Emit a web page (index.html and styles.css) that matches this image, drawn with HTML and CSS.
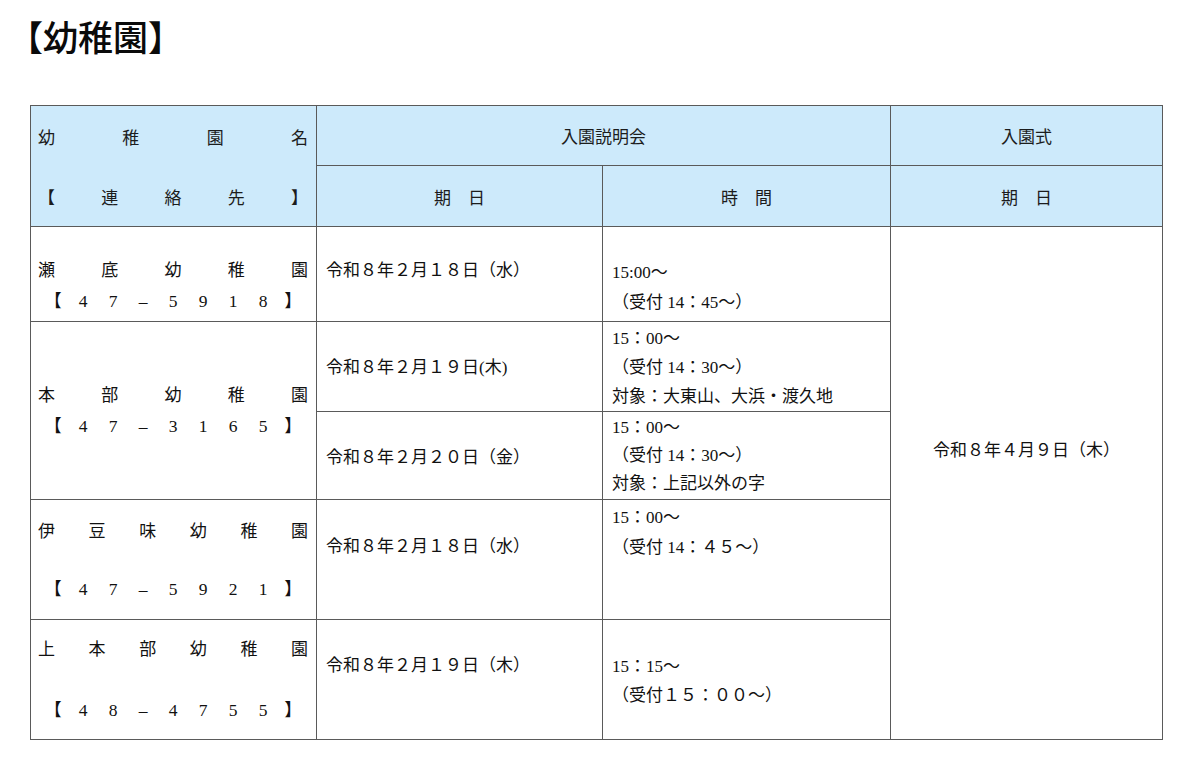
FILE: index.html
```html
<!DOCTYPE html>
<html lang="ja">
<head>
<meta charset="utf-8">
<title>幼稚園</title>
<link rel="stylesheet" href="styles.css">
</head>
<body>
<div class="page">
  <h1 class="title">【幼稚園】</h1>
  <table class="sched">
    <colgroup>
      <col class="c1"><col class="c2"><col class="c3"><col class="c4">
    </colgroup>
    <thead>
      <tr class="hr1">
        <th class="namehead" rowspan="2">
          <div class="hline spread"><span>幼</span><span>稚</span><span>園</span><span>名</span></div>
          <div class="hline spread"><span>【</span><span>連</span><span>絡</span><span>先</span><span>】</span></div>
        </th>
        <th colspan="2">入園説明会</th>
        <th>入園式</th>
      </tr>
      <tr class="hr2">
        <th>期　日</th>
        <th>時　間</th>
        <th>期　日</th>
      </tr>
    </thead>
    <tbody>
      <tr class="r1">
        <td class="name n1">
          <div class="ln spread"><span>瀬</span><span>底</span><span>幼</span><span>稚</span><span>園</span></div>
          <div class="ln phone"><span>【</span><span>4</span><span>7</span><span>–</span><span>5</span><span>9</span><span>1</span><span>8</span><span>】</span></div>
        </td>
        <td class="date d1"><div class="ln">令和８年２月１８日（水）</div></td>
        <td class="time t1"><div class="ln">15:00～</div><div class="ln">（受付 14：45～）</div></td>
        <td class="ceremony" rowspan="5"><div class="ln">令和８年４月９日（木）</div></td>
      </tr>
      <tr class="r2">
        <td class="name n2" rowspan="2">
          <div class="ln spread"><span>本</span><span>部</span><span>幼</span><span>稚</span><span>園</span></div>
          <div class="ln phone"><span>【</span><span>4</span><span>7</span><span>–</span><span>3</span><span>1</span><span>6</span><span>5</span><span>】</span></div>
        </td>
        <td class="date d2"><div class="ln">令和８年２月１９日(木)</div></td>
        <td class="time t2"><div class="ln">15：00～</div><div class="ln">（受付 14：30～）</div><div class="ln">対象：大東山、大浜・渡久地</div></td>
      </tr>
      <tr class="r3">
        <td class="date d3"><div class="ln">令和８年２月２０日（金）</div></td>
        <td class="time t3"><div class="ln">15：00～</div><div class="ln">（受付 14：30～）</div><div class="ln">対象：上記以外の字</div></td>
      </tr>
      <tr class="r4">
        <td class="name n4">
          <div class="ln spread"><span>伊</span><span>豆</span><span>味</span><span>幼</span><span>稚</span><span>園</span></div>
          <div class="ln"></div>
          <div class="ln phone"><span>【</span><span>4</span><span>7</span><span>–</span><span>5</span><span>9</span><span>2</span><span>1</span><span>】</span></div>
        </td>
        <td class="date d4"><div class="ln">令和８年２月１８日（水）</div></td>
        <td class="time t4"><div class="ln">15：00～</div><div class="ln">（受付 14：４５～）</div></td>
      </tr>
      <tr class="r5">
        <td class="name n5">
          <div class="ln spread"><span>上</span><span>本</span><span>部</span><span>幼</span><span>稚</span><span>園</span></div>
          <div class="ln"></div>
          <div class="ln phone"><span>【</span><span>4</span><span>8</span><span>–</span><span>4</span><span>7</span><span>5</span><span>5</span><span>】</span></div>
        </td>
        <td class="date d5"><div class="ln">令和８年２月１９日（木）</div></td>
        <td class="time t5"><div class="ln">15：15～</div><div class="ln">（受付１５：００～）</div></td>
      </tr>
    </tbody>
  </table>
</div>
</body>
</html>
```
FILE: styles.css
```css
html, body {
  margin: 0;
  background: #ffffff;
}

body {
  color: #111111;
  font-family: "Liberation Serif", "Noto Sans CJK JP", serif;
}

.page {
  padding: 16px 0 0 8px;
}

.title {
  margin: 0 0 49px 0;
  font-family: "Noto Sans CJK JP", sans-serif;
  font-weight: 500;
  font-size: 35px;
  line-height: 40px;
  color: #0a0a0a;
}

.sched {
  border-collapse: collapse;
  table-layout: fixed;
  width: 1132px;
  margin-left: 22px;
  font-size: 17px;
}

.c1 { width: 286px; }
.c2 { width: 286px; }
.c3 { width: 288px; }
.c4 { width: 272px; }

.sched th,
.sched td {
  border: 1px solid #5a5a5a;
  padding: 0;
}

.sched th {
  background: #cdeafb;
  font-family: "Noto Sans CJK JP", sans-serif;
  font-weight: normal;
  color: #1c1c1c;
  text-align: center;
  vertical-align: middle;
}

.hr1 { height: 60px; }
.hr2 { height: 61px; }

.sched th.namehead {
  padding: 0 8px 0 7px;
}

.hline {
  height: 60px;
  align-items: center;
}

.spread {
  display: flex;
  justify-content: space-between;
}

.phone {
  display: grid;
  grid-template-columns: repeat(9, 1fr);
  justify-items: center;
  font-size: 17.5px;
}

.sched td {
  vertical-align: top;
  text-align: left;
}

.ln {
  height: 30px;
  line-height: 30px;
  overflow: visible;
  white-space: nowrap;
}

.spread.ln {
  align-items: center;
}

.name {
  padding-left: 7px !important;
  padding-right: 8px !important;
}

.date,
.time {
  padding-left: 9px !important;
}

.r1 { height: 95px; }
.r2 { height: 90px; }
.r3 { height: 88px; }
.r4 { height: 120px; }
.r5 { height: 120px; }

.n1 { padding-top: 29px !important; }
.d1 { padding-top: 29px !important; }
.t1 { padding-top: 31px !important; }

.n2 { padding-top: 59px !important; }
.d2 { padding-top: 31px !important; }
.t2 { padding-top: 2px !important; }
.t2 .ln { height: 29px; line-height: 29px; }

.d3 { padding-top: 31px !important; }
.t3 { padding-top: 2px !important; }
.t3 .ln { height: 28px; line-height: 28px; }

.n4 { padding-top: 17px !important; }
.n4 .ln { height: 29px; line-height: 29px; }
.d4 { padding-top: 32px !important; }
.t4 { padding-top: 3px !important; }

.n5 { padding-top: 15px !important; }
.d5 { padding-top: 31px !important; }
.t5 { padding-top: 32px !important; }
.t5 .ln { height: 29px; line-height: 29px; }

.ceremony {
  text-align: center !important;
  padding-top: 209px !important;
}
```
